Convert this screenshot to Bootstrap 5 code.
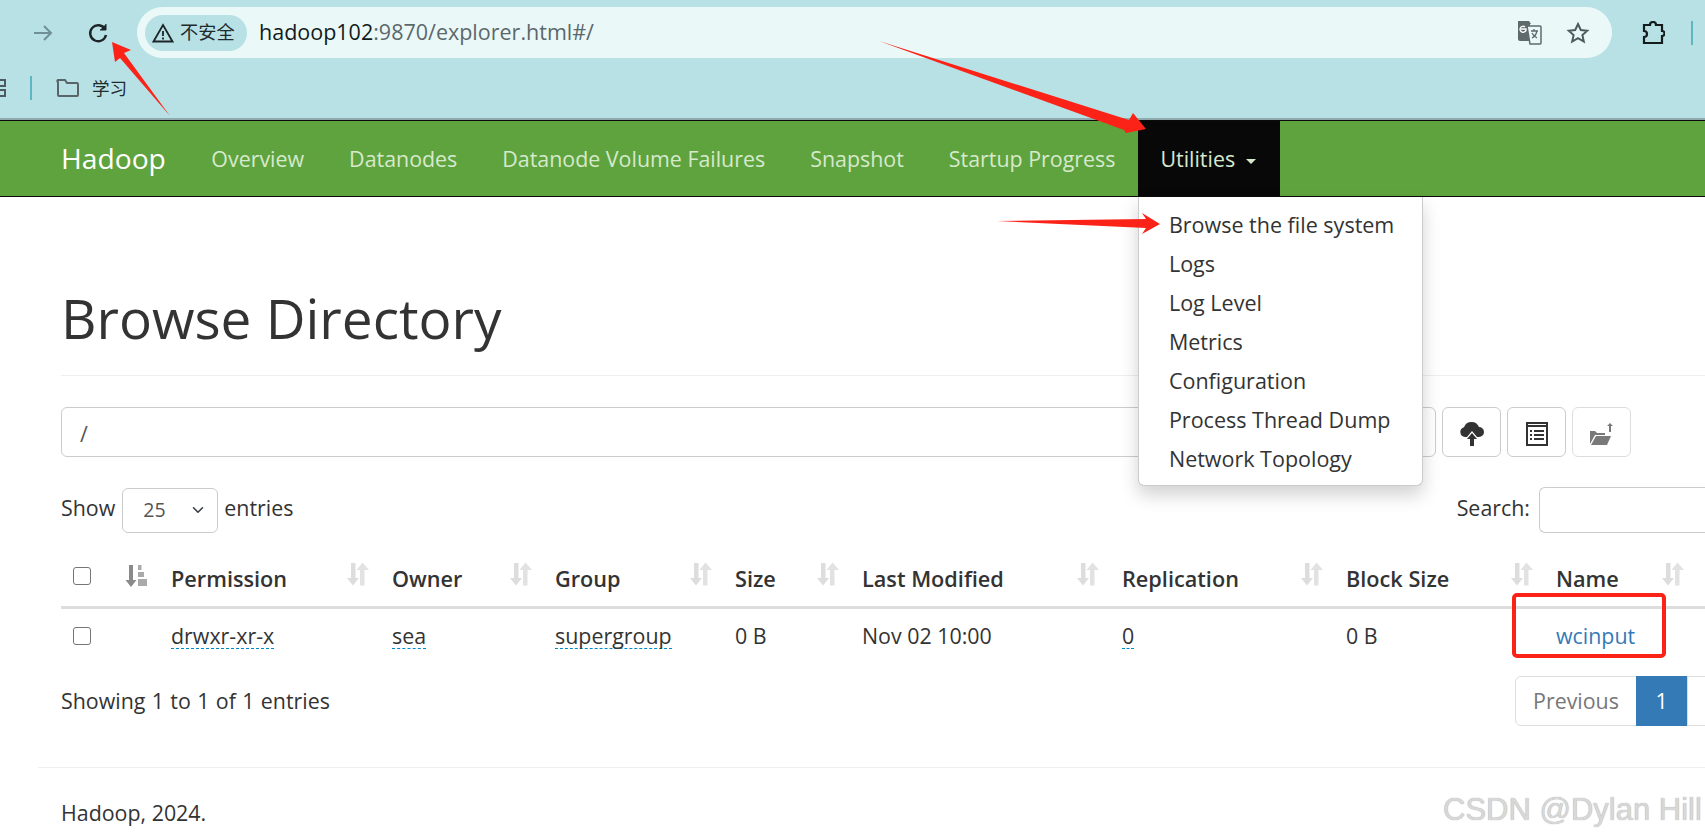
<!DOCTYPE html>
<html lang="en">
<head>
<meta charset="utf-8">
<title>Browsing HDFS</title>
<link href="https://cdn.jsdelivr.net/npm/bootstrap@5.3.0/dist/css/bootstrap.min.css" rel="stylesheet">
<style>
html,body{height:838px;overflow:hidden;background:#fff}
body{font-family:"Open Sans","Noto Sans CJK SC",sans-serif;font-size:21.4px;color:#333;position:relative;width:1705px}
.chrome-top{height:120px;background:#b8e1e5;border-bottom:2px solid #8fa9ad;position:relative}
.tool-row{height:58px;padding-top:7px}
.ico-slot{flex:none}
.back-slot{margin-left:31px;width:24px}
.reload-slot{margin-left:31px;width:24px;margin-right:27px}
.omni{width:1475px;height:51px;border-radius:26px;background:#ebf8f8;padding:0 10px 0 8px}
.sec-chip{width:102px;height:36px;border-radius:18px;background:#b8e1e5;font-size:18.2px;color:#1f2a2c;gap:6px;padding-left:7px;margin-right:12px;white-space:nowrap}
.url-host{font-size:21.5px;color:#111b1d}
.url-rest{color:#5b686b}
.omni-end{margin-left:auto;gap:24px;padding-right:12px}
.ext-slot{margin-left:29px}
.vsep{width:2px;height:24px;background:#5fb6c1}
.ext-sep{margin-left:26px}
.mark-row{height:60px}
.cut-grid{width:6px;margin-right:24px}
.mark-folder{margin-left:24px;margin-right:12px}
.mark-text{font-size:17.6px;color:#1f2a2c}
.hd-bar{height:77px;background:#5fa33e;border-top:1px solid #0a0a0a;border-bottom:1px solid #0a0a0a;padding:0 0 0 38px;flex-wrap:nowrap;justify-content:flex-start}
.hd-bar .navbar-brand{color:#fff;font-size:28.2px;padding:0 23px;margin:0;height:75px;line-height:75px}
.hd-bar .navbar-nav .nav-link{color:#d6e9cc;font-size:21.4px;padding:0 22.5px;height:75px;line-height:75px;white-space:nowrap}
.hd-bar .navbar-nav .nav-item.is-open>.nav-link{background:#080808;color:#d6e9cc;padding-right:23.5px}
.hd-bar .dropdown-toggle::after{border-top-width:5.5px;border-left-width:5.5px;border-right-width:5.5px;margin-left:11px;vertical-align:3px}
.hd-bar .navbar-nav .util-menu{display:block;position:absolute;top:76px;left:0;width:285px;height:289px;padding:8px 0 0;margin:0;border-radius:0 0 6px 6px;border:1px solid #ccc;border-top:0;box-shadow:0 9px 18px rgba(0,0,0,.18)}
.util-menu .dropdown-item{font-size:21.5px;color:#333;padding:0 30px;height:39px;line-height:39px}
.main-wrap{padding-left:61px}
.head-block{height:179px;border-bottom:1px solid #eee;padding-bottom:22px}
.head-block h1{font-size:54.9px;font-weight:400;color:#333;margin:0;line-height:70px}
.path-row{margin-top:31px;height:50px;gap:6px}
.path-box{width:1375px;height:50px;border:1px solid #ccc;border-radius:6px;padding:2px 18px 0;font-size:21.4px;color:#555;line-height:48px}
.tool-btn{width:59px;height:50px;border:1px solid #ccc;border-radius:6px;background:#fff;padding:0}
.tool-btn.is-off{opacity:.65}
.len-row{margin-top:30px;height:46px}
.len-word{padding-bottom:4px}
.len-select{width:96px;height:45px;margin:0 6px 0 7px;font-size:19.5px;color:#555;border-color:#ccc;padding:0 0 0 20px;border-radius:6px;background-position:right 11px center}
.search-box{width:166px;height:46px;border:1px solid #ccc;border-right:0;margin-left:9px;border-radius:6px 0 0 6px}
.hd-table{table-layout:fixed;width:100%;margin:14px 0 0;color:#333;font-size:21.4px}
.hd-table th,.hd-table td{padding:0 11px 0 12px;border:0;vertical-align:middle;background:transparent;box-shadow:none}
.hd-table thead tr{height:60px}
.hd-table thead th{border-bottom:3px solid #ddd;font-weight:600;font-size:21.7px;white-space:nowrap}
.hd-table thead th:last-child{padding-right:21px}
.hd-table tbody tr{height:57px}
.hd-table .form-check-input{width:18px;height:18px;margin:0;border:1px solid #767676;border-radius:3px;display:block}
.head-cell{padding-top:6px}
.sort-ico{flex:none;margin-top:-1px}
.lone-ico{margin-top:-1px;display:block}
.dash-val{display:inline-block;line-height:1.12;border-bottom:1px dashed #08c}
.file-link{color:#337ab7;text-decoration:none}
.foot-row{margin-top:12px;height:50px}
.count-text{word-spacing:.8px}
.hd-pager{margin:0;width:190px}
.hd-pager .page-link{height:50px;line-height:48px;padding:0;font-size:21.4px;border-color:#ddd;color:#777;text-align:center;border-radius:0}
.hd-pager .page-item:first-child .page-link{width:122px;border-radius:6px 0 0 6px}
.hd-pager .page-item.active .page-link{width:51px;background:#337ab7;border-color:#337ab7;color:#fff}
.hd-pager .page-item:last-child{flex:1}
.hd-pager .page-item:last-child .page-link{border-right:0;height:50px;margin-left:0;width:100%;border-radius:0}
.end-rule{margin:41px 0 0 38px;border-top:1px solid #eee}
.foot-text{padding:29px 0 0 61px;font-size:21.4px}
.red-layer{position:absolute;left:0;top:0;pointer-events:none;z-index:1100}
.water{position:absolute;left:1443px;top:790px;font-family:"Liberation Sans",sans-serif;font-size:31px;color:#d8d8d8;white-space:nowrap;text-shadow:0 0 1px #999;line-height:40px;z-index:1100}
</style>
</head>
<body>
<div class="chrome-top">
  <div class="tool-row d-flex align-items-center">
    <span class="ico-slot back-slot d-flex"><svg width="24" height="24" viewBox="0 0 24 24" fill="none" stroke="#6f9095" stroke-width="2"><path d="M3 12H20M13 5l7 7-7 7"/></svg></span>
    <span class="ico-slot reload-slot d-flex"><svg width="24" height="24" viewBox="0 0 24 24" fill="none" stroke="#1d2526" stroke-width="2.4"><path d="M19 8a8 8 0 1 0 1 6"/><path d="M20 3v6h-6" fill="#1d2526" stroke-width="1"/></svg></span>
    <div class="omni d-flex align-items-center">
      <span class="sec-chip d-flex align-items-center"><svg width="22" height="20" viewBox="0 0 22 20" fill="none" stroke="#1d2526" stroke-width="1.8"><path d="M11 2 20.5 18.5H1.5Z"/><path d="M11 8v5M11 14.5v2"/></svg><span>不安全</span></span>
      <span class="url-host">hadoop102<span class="url-rest">:9870/explorer.html#/</span></span>
      <span class="omni-end d-flex align-items-center">
        <svg width="25" height="25" viewBox="0 0 25 25"><path d="M1 1h11l2 3h-1v17H3a2 2 0 0 1-2-2Z" fill="#5f6a6d"/><path d="M10 6h13a1 1 0 0 1 1 1v16a1 1 0 0 1-1 1H13Z" fill="#ebf8f8" stroke="#5f6a6d" stroke-width="1.5"/><path d="M4 9h5v1a3 3 0 1 1-1-3" fill="none" stroke="#fff" stroke-width="1.4"/><path d="M14 11h7M17 9v2M20 11c-1 4-3 6-5 7M15 13c1 2 3 4 5 5" fill="none" stroke="#5f6a6d" stroke-width="1.3"/></svg>
        <svg width="24" height="24" viewBox="0 0 24 24" fill="none" stroke="#4e5a5d" stroke-width="2"><path d="M12 3l2.800 6 6.400.7-4.800 4.400 1.400 6.400L12 17.200 6.200 20.500l1.400-6.400L2.800 9.700 9.200 9Z"/></svg>
      </span>
    </div>
    <span class="ico-slot ext-slot d-flex"><svg width="24" height="24" viewBox="0 0 24 24" fill="none" stroke="#151c1e" stroke-width="2.2"><path d="M3 4h6a3 3 0 0 1 6 0h6v6a2.500 2.500 0 0 1 0 5v7H3v-6a3 3 0 0 0 0-6Z"/></svg></span>
    <span class="vsep ext-sep"></span>
  </div>
  <div class="mark-row d-flex align-items-center">
    <span class="cut-grid d-flex"><svg width="6" height="20" viewBox="0 0 6 20" fill="none" stroke="#4d5a5d" stroke-width="2"><path d="M0 2h5v6H0M0 12h5v6H0"/></svg></span>
    <span class="vsep"></span>
    <span class="mark-folder d-flex"><svg width="24" height="18" viewBox="0 0 24 18" fill="none" stroke="#5a6568" stroke-width="2"><path d="M2 3a1 1 0 0 1 1-2h6l2 3h10a1 1 0 0 1 1 1v11a1 1 0 0 1-1 1H3a1 1 0 0 1-1-1Z"/></svg></span>
    <span class="mark-text">学习</span>
  </div>
</div>

<nav class="navbar navbar-expand hd-bar">
  <a class="navbar-brand" href="#">Hadoop</a>
  <ul class="navbar-nav">
    <li class="nav-item"><a class="nav-link" href="#">Overview</a></li>
    <li class="nav-item"><a class="nav-link" href="#">Datanodes</a></li>
    <li class="nav-item"><a class="nav-link" href="#">Datanode Volume Failures</a></li>
    <li class="nav-item"><a class="nav-link" href="#">Snapshot</a></li>
    <li class="nav-item"><a class="nav-link" href="#">Startup Progress</a></li>
    <li class="nav-item dropdown is-open position-relative">
      <a class="nav-link dropdown-toggle" href="#">Utilities</a>
      <ul class="dropdown-menu util-menu">
        <li><a class="dropdown-item" href="#">Browse the file system</a></li>
        <li><a class="dropdown-item" href="#">Logs</a></li>
        <li><a class="dropdown-item" href="#">Log Level</a></li>
        <li><a class="dropdown-item" href="#">Metrics</a></li>
        <li><a class="dropdown-item" href="#">Configuration</a></li>
        <li><a class="dropdown-item" href="#">Process Thread Dump</a></li>
        <li><a class="dropdown-item" href="#">Network Topology</a></li>
      </ul>
    </li>
  </ul>
</nav>

<div class="main-wrap">
  <div class="head-block d-flex align-items-end"><h1>Browse Directory</h1></div>

  <div class="path-row d-flex">
    <div class="path-box">/</div>
    <button class="tool-btn" type="button" aria-label="Upload"><svg width="24" height="26" viewBox="0 0 24 26"><path d="M7 16H5a5 5 0 0 1-1-9.800A8 8 0 0 1 19 6a5 5 0 0 1 0 10h-2l-5-6Z" fill="#333"/><path d="M12 12l5 6h-3v7h-4v-7H7Z" fill="#333"/></svg></button>
    <button class="tool-btn" type="button" aria-label="List"><svg width="22" height="24" viewBox="0 0 22 24"><path d="M1 1h20v22H1Z" fill="none" stroke="#333" stroke-width="2"/><path d="M1 3h20v2H1Z" fill="#333"/><path d="M4 8h2v2H4ZM8 8h10v2H8ZM4 12h2v2H4ZM8 12h10v2H8ZM4 16h2v2H4ZM8 16h10v2H8Z" fill="#333"/></svg></button>
    <button class="tool-btn is-off" type="button" aria-label="New folder"><svg width="26" height="24" viewBox="0 0 26 24"><path d="M1 9h5l2 2h8v2H6l-5 9Z" fill="#333"/><path d="M7 14h15l-4 9H2Z" fill="#333"/><path d="M21 1l3 3h-2v6h-2V4h-2Z" fill="#333"/></svg></button>
  </div>

  <div class="len-row d-flex align-items-center">
    <span class="len-word">Show</span>
    <select class="form-select len-select" aria-label="entries"><option>25</option></select>
    <span class="len-word">entries</span>
    <span class="len-word ms-auto">Search:</span>
    <input class="search-box" type="text" aria-label="Search">
  </div>

  <table class="table hd-table">
    <colgroup><col style="width:52px"><col style="width:46px"><col style="width:221px"><col style="width:163px"><col style="width:180px"><col style="width:127px"><col style="width:260px"><col style="width:224px"><col style="width:210px"><col style="width:161px"></colgroup>
    <thead>
      <tr>
        <th><input class="form-check-input" type="checkbox" aria-label="all"></th>
        <th><svg class="lone-ico" width="23" height="24" viewBox="0 0 23 24"><path d="M4 1h4v15h3.500l-5.500 7-5.500-7H4Z" fill="#8a8a8a"/><path d="M13 1h3.500v5H13ZM13 8h6v5h-6ZM13 15h9v7h-9Z" fill="#aaa"/></svg></th>
        <th><div class="head-cell d-flex justify-content-between align-items-start">Permission<svg class="sort-ico" width="22" height="24" viewBox="0 0 22 24"><use href="#srt"/></svg></div></th>
        <th><div class="head-cell d-flex justify-content-between align-items-start">Owner<svg class="sort-ico" width="22" height="24" viewBox="0 0 22 24"><use href="#srt"/></svg></div></th>
        <th><div class="head-cell d-flex justify-content-between align-items-start">Group<svg class="sort-ico" width="22" height="24" viewBox="0 0 22 24"><use href="#srt"/></svg></div></th>
        <th><div class="head-cell d-flex justify-content-between align-items-start">Size<svg class="sort-ico" width="22" height="24" viewBox="0 0 22 24"><use href="#srt"/></svg></div></th>
        <th><div class="head-cell d-flex justify-content-between align-items-start">Last Modified<svg class="sort-ico" width="22" height="24" viewBox="0 0 22 24"><use href="#srt"/></svg></div></th>
        <th><div class="head-cell d-flex justify-content-between align-items-start">Replication<svg class="sort-ico" width="22" height="24" viewBox="0 0 22 24"><use href="#srt"/></svg></div></th>
        <th><div class="head-cell d-flex justify-content-between align-items-start">Block Size<svg class="sort-ico" width="22" height="24" viewBox="0 0 22 24"><use href="#srt"/></svg></div></th>
        <th><div class="head-cell d-flex justify-content-between align-items-start">Name<svg class="sort-ico" width="22" height="24" viewBox="0 0 22 24"><use href="#srt"/></svg></div></th>
      </tr>
    </thead>
    <tbody>
      <tr>
        <td><input class="form-check-input" type="checkbox" aria-label="row"></td>
        <td></td>
        <td><span class="dash-val">drwxr-xr-x</span></td>
        <td><span class="dash-val">sea</span></td>
        <td><span class="dash-val">supergroup</span></td>
        <td>0 B</td>
        <td>Nov 02 10:00</td>
        <td><span class="dash-val">0</span></td>
        <td>0 B</td>
        <td><a class="file-link" href="#">wcinput</a></td>
      </tr>
    </tbody>
  </table>

  <div class="foot-row d-flex justify-content-between align-items-center">
    <span class="count-text">Showing 1 to 1 of 1 entries</span>
    <ul class="pagination hd-pager">
      <li class="page-item"><a class="page-link" href="#">Previous</a></li>
      <li class="page-item active"><a class="page-link" href="#">1</a></li>
      <li class="page-item"><a class="page-link" href="#">&nbsp;</a></li>
    </ul>
  </div>
</div>
<div class="end-rule"></div>
<div class="foot-text">Hadoop, 2024.</div>

<svg width="0" height="0" class="position-absolute"><defs><g id="srt"><path d="M4 1h4.500v15H12l-6 7.500L0 16h4Z" fill="#ddd"/><path d="M17.500 23.500H13V8h-3.500L15.500.5 22 8h-4.500Z" fill="#e2e2e2"/></g></defs></svg>

<svg class="red-layer" width="1705" height="838" viewBox="0 0 1705 838">
  <polygon points="112,42 131,50 124,53 170,116 120,58 115,62" fill="#fb2318"/>
  <polygon points="879,41 1129,120 1133,113 1146,129 1126,133 1124,130" fill="#fb2318"/>
  <polygon points="997,221 1146,219 1142,213 1160,224 1142,234 1146,228" fill="#fb2318"/>
  <rect x="1514" y="595" width="150" height="61" rx="3" fill="none" stroke="#fb2318" stroke-width="4"/>
</svg>
<div class="water">CSDN @Dylan Hill</div>
</body>
</html>
